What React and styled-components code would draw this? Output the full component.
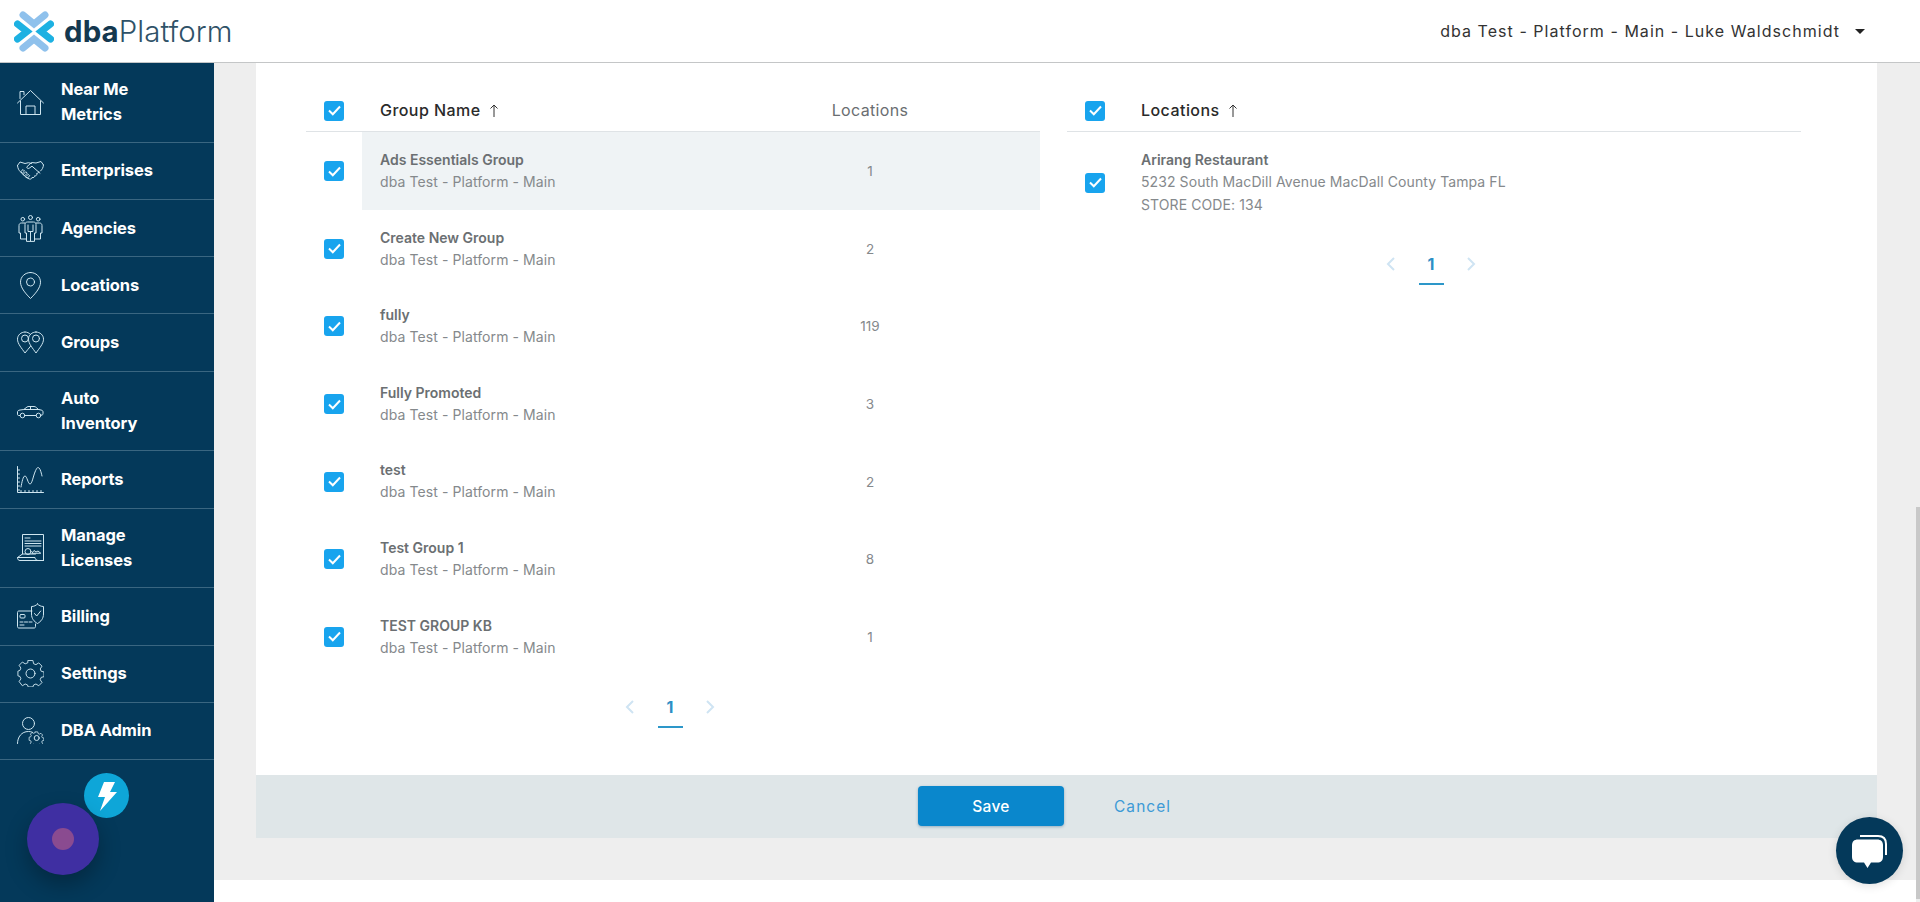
import React from "react";
import styled, { createGlobalStyle } from "styled-components";

const GlobalStyle = createGlobalStyle`
  html, body {
    margin: 0;
    height: 100%;
    overflow: hidden;
    background: #fff;
    font-family: Inter, "Open Sans", "Liberation Sans", sans-serif;
  }
  #root { height: 100%; }
  * { box-sizing: border-box; }
`;

const Shell = styled.div`
  height: 100vh;
  display: flex;
  flex-direction: column;
  position: relative;
  overflow: hidden;
`;

const Header = styled.header`
  height: 63px;
  flex: none;
  background: #fff;
  display: flex;
  align-items: center;
  justify-content: space-between;
  padding: 0 55px 0 14px;
  border-bottom: 1px solid #c4c6c7;
  position: relative;
  z-index: 3;
`;

const Logo = styled.div`
  display: flex;
  align-items: center;
  gap: 10px;
`;

const LogoText = styled.div`
  font-size: 29.4px;
  font-weight: 300;
  color: #2f5268;
  letter-spacing: 0.1px;

  b {
    font-weight: 700;
    color: #14384f;
  }
`;

const Account = styled.div`
  display: flex;
  align-items: center;
  gap: 15px;
  font-size: 16px;
  color: #333;
  letter-spacing: 1.04px;
`;

const Caret = styled.span`
  width: 0;
  height: 0;
  border-left: 5px solid transparent;
  border-right: 5px solid transparent;
  border-top: 5px solid #222;
`;

const Body = styled.div`
  flex: 1;
  min-height: 0;
  display: flex;
`;

const Sidebar = styled.nav`
  width: 214px;
  flex: none;
  background: #04395a;
`;

const NavItem = styled.div`
  height: ${({ $tall }) => ($tall ? "79.8px" : "57.2px")};
  display: flex;
  align-items: center;
  gap: 17px;
  padding-left: 17px;
  border-bottom: 1px solid #3a6681;
  color: #fff;
  font-size: 16.5px;
  font-weight: 700;
  line-height: 25px;
  letter-spacing: -0.1px;

  svg {
    flex: none;
    width: 27px;
    height: 27px;
    fill: none;
    stroke: #cfe6f0;
    stroke-width: 1;
    stroke-linejoin: round;
    stroke-linecap: round;
  }
`;

const Main = styled.main`
  flex: 1;
  min-width: 0;
  display: flex;
  background: #eee;
`;

const Page = styled.div`
  flex: 1;
  min-width: 0;
  display: flex;
  flex-direction: column;
`;

const Workspace = styled.div`
  padding: 0 39px 42px 42px;
`;

const Card = styled.section`
  background: #fff;
`;

const Tables = styled.div`
  height: 712px;
  padding: 16px 77px 0 50px;
  display: flex;
  gap: 27px;
`;

const TableWrap = styled.div`
  width: 734px;
`;

const HeadRow = styled.div`
  height: 53px;
  display: grid;
  grid-template-columns: 56px 338px 340px;
  align-items: center;
  border-bottom: 1px solid #dfe3e6;
  padding-top: 10px;
`;

const Row = styled.div`
  height: ${({ $tall }) => ($tall ? "100px" : "77.6px")};
  display: grid;
  grid-template-columns: 56px 338px 340px;
  align-items: center;
`;

const CheckCell = styled.div`
  padding: 1px 0 0 18px;
  display: flex;
  align-items: center;
`;

const Box = styled.span`
  width: 20px;
  height: 20px;
  border-radius: 3px;
  background: #18a4ee;
  display: flex;
  align-items: center;
  justify-content: center;
`;

const HeadCell = styled.div`
  padding-left: 18px;
  display: flex;
  align-items: center;
  gap: 8px;
  font-size: 16px;
  font-weight: 500;
  color: #2a2a2a;
  letter-spacing: 0.45px;
  white-space: nowrap;
`;

const CountHead = styled.div`
  text-align: center;
  font-size: 16px;
  font-weight: 400;
  color: #6a6e71;
  letter-spacing: 0.35px;
`;

const NameCell = styled.div`
  height: 100%;
  padding: 1px 0 0 18px;
  display: flex;
  flex-direction: column;
  justify-content: center;
  background: ${({ $active }) => ($active ? "#eff3f5" : "transparent")};
  white-space: nowrap;
`;

const CountCell = styled.div`
  height: 100%;
  padding-top: 1px;
  display: flex;
  align-items: center;
  justify-content: center;
  font-size: 13.5px;
  color: #85898c;
  background: ${({ $active }) => ($active ? "#eff3f5" : "transparent")};
`;

const Title = styled.div`
  font-size: 14px;
  line-height: 22px;
  font-weight: 600;
  color: #6b6f72;
`;

const Sub = styled.div`
  font-size: 14px;
  line-height: 22.5px;
  font-weight: 400;
  color: #85898c;
  letter-spacing: 0.09px;
`;

const Pager = styled.div`
  margin: 21px 0 0 318px;
  width: 92px;
  display: flex;
  align-items: flex-start;
  justify-content: space-between;
  color: #cfe4f3;

  svg {
    margin-top: 3px;
  }
`;

const PageNum = styled.div`
  width: 25px;
  height: 32px;
  text-align: center;
  font-size: 16px;
  line-height: 22px;
  font-weight: 700;
  color: #2d8fc6;
  border-bottom: 2px solid #2d97c9;
`;

const Footer = styled.div`
  height: 63px;
  background: #dfe6e8;
  display: flex;
  align-items: flex-start;
  padding: 11px 0 0 662px;
`;

const Save = styled.button`
  width: 146px;
  height: 40px;
  border: 0;
  border-radius: 4px;
  background: #0a87cc;
  color: #fff;
  font: 500 15.5px Inter, sans-serif;
  letter-spacing: 0.3px;
  box-shadow: 0 1px 3px rgba(0, 70, 120, 0.35);
`;

const Cancel = styled.span`
  margin-left: 50px;
  line-height: 42px;
  font-size: 15.5px;
  color: #3d9ad6;
  letter-spacing: 1.05px;
`;

const BottomBand = styled.div`
  flex: 1;
  background: #fff;
`;

const ScrollRail = styled.div`
  width: 4px;
  flex: none;
  padding: 444px 0 3px;
  background: #eee;
`;

const ScrollThumb = styled.div`
  height: 100%;
  background: #c8c8c8;
`;

const RecordOrb = styled.div`
  position: absolute;
  left: 27px;
  top: 803px;
  width: 72px;
  height: 72px;
  border-radius: 50%;
  background: #3f2fa2;
  box-shadow: 0 10px 22px rgba(0, 0, 0, 0.28);
  display: flex;
  align-items: center;
  justify-content: center;

  &::after {
    content: "";
    width: 22px;
    height: 22px;
    border-radius: 50%;
    background: #8a4b90;
  }
`;

const BoltBadge = styled.div`
  position: absolute;
  left: 84px;
  top: 773px;
  width: 45px;
  height: 45px;
  border-radius: 50%;
  background: #0ea6d8;
  display: flex;
  align-items: center;
  justify-content: center;
`;

const ChatBubble = styled.div`
  position: absolute;
  left: 1836px;
  top: 817px;
  width: 67px;
  height: 67px;
  border-radius: 50%;
  background: #04395a;
  box-shadow: 0 2px 10px rgba(0, 0, 0, 0.12);
  display: flex;
  align-items: center;
  justify-content: center;
`;

const LogoMark = () => (
  <svg width="40" height="41" viewBox="0 0 40 41" fill="none" strokeWidth="7" strokeLinecap="round">
    <polyline points="9,4 20,13 31,4" stroke="#8fc1ec" />
    <polyline points="9,37 20,28 31,37" stroke="#8fc1ec" />
    <polyline points="3.500,13 13,20.500 3.500,28" stroke="#1db1e2" />
    <polyline points="36.500,13 27,20.500 36.500,28" stroke="#1db1e2" />
  </svg>
);

const HomeIcon = () => (
  <svg viewBox="0 0 27 27">
    <path d="M.5 14 13.5 1.5 26.5 14" />
    <path d="M3 9.5V2.5h4v3.2" />
    <path d="M3.5 12v13.5h20V12" />
    <path d="M9 25.5V17h9v8.5" />
  </svg>
);

const HandshakeIcon = () => (
  <svg viewBox="0 0 27 27">
    <path d="M.5 8.5 3 5l5 1.5 3.5-.8 3 .8" />
    <path d="M26.5 8 24 4.5 19 6l-4.5-.5-4.5 4.2c-.8 1.2 1 2.3 2.2 1.5l2.8-2 8 7" />
    <path d="M.5 8.5c.2 3 1.5 5 3 6.3l4.5 4.7c1.5 1.3 3 2 4.5 2.5 1.5.4 2.5-.5 2.5-1.5 1.5.5 3-.4 2.6-1.7 1.5.3 2.8-1 2.1-2.4 1.3 0 2-.7 2-1.6" />
    <path d="M26.5 8c-.2 2.5-1.3 4.5-3 6" />
    <path d="m4 14.5 2-2 1.5 1.5-2 2zM6.5 17l2.3-2.3 1.5 1.5-2.3 2.3zM9.2 19.3l2-2 1.5 1.5-2 2z" />
  </svg>
);

const PeopleIcon = () => (
  <svg viewBox="0 0 27 27">
    <circle cx="13.5" cy="2.5" r="2" />
    <circle cx="5.8" cy="4.2" r="1.8" />
    <circle cx="21.2" cy="4.2" r="1.8" />
    <path d="M9.5 26v-8H8V9.5c0-1.5 1-2.5 2.5-2.5h6c1.5 0 2.5 1 2.5 2.5V18h-1.5v8z" />
    <path d="M11 10v6.5h5V10M13.5 16.5V26" />
    <path d="M8 8H4.5C3 8 2 9 2 10.5V18h1.5v6h6" />
    <path d="M19 8h3.5C24 8 25 9 25 10.5V18h-1.5v6h-6" />
  </svg>
);

const PinIcon = () => (
  <svg viewBox="0 0 27 27">
    <path d="M13.5.5c5.5 0 10 4.200 10 9.700 0 6-6 12.300-10 16.300-4-4-10-10.300-10-16.300C3.500 4.700 8 .5 13.500.5z" />
    <circle cx="13.500" cy="10" r="4" />
  </svg>
);

const GroupsIcon = () => (
  <svg viewBox="0 0 27 27">
    <path d="M8 3C3.800 3 .5 6.200.5 10.200c0 4.600 4.200 9 7.500 13.800 1.800-2.300 3.600-4.400 5.500-6.700" />
    <path d="M19 3c4.200 0 7.500 3.200 7.500 7.200 0 4.600-4.200 9-7.500 13.800-3.300-4.800-7.500-9.200-7.500-13.800C11.500 6.200 14.800 3 19 3z" />
    <path d="M8 3c2 0 4 .8 5.500 2.300" />
    <circle cx="8" cy="9.500" r="3.500" />
    <circle cx="19" cy="9.500" r="3.500" />
  </svg>
);

const CarIcon = () => (
  <svg viewBox="0 0 27 27">
    <path d="M3 18.500H1.500C.8 18.500.5 18 .5 17v-2.200c0-1 1-1.600 2.500-1.800l3.800-.5 3.200-2.500c.7-.5 1.300-.5 2-.5h5c1 0 1.600.3 2.300 1l2.200 2 2.500.5c1.500.3 2 1 2 2v1.500c0 1-.4 1.500-1.200 1.500H24" />
    <circle cx="5.500" cy="18.500" r="2.300" />
    <circle cx="21.500" cy="18.500" r="2.300" />
    <path d="M8 18.500h11M7 12.500h15M13.500 10v2.500" />
  </svg>
);

const ChartIcon = () => (
  <svg viewBox="0 0 27 27">
    <path d="M.5.5v26h26" />
    <path d="M.5 4h2M.5 8h2M.5 12h2M.5 16h2M.5 20h2M.5 24h2M4 26.500v-2M8 26.500v-2M12 26.500v-2M16 26.500v-2M20 26.500v-2M24 26.500v-2" />
    <path d="M4 21c1-5 2-11 4-11s3 8 5 8 3-7 5-12 3-5 4-4c1.500 1 2.500 6 3 8" />
  </svg>
);

const LicenseIcon = () => (
  <svg viewBox="0 0 27 27">
    <path d="M5.500 20V.5h21v26" />
    <path d="M26.500 26.500H3C1.500 26.500.5 25.500.5 23.500H18c.3 2 1.300 3 3 3" />
    <path d="M.5 23.500 5.500 20h13" />
    <path d="M8 4h5M8 7h16M8 9.500h16M8 12h16" />
    <circle cx="11" cy="17.500" r="3" />
    <path d="m15 19 2-2.500 2 1.500 2-1 2.500 2z" />
  </svg>
);

const BillingIcon = () => (
  <svg viewBox="0 0 27 27">
    <path d="M15 8H2C1 8 .5 8.500.5 9.500v14c0 1 .5 1.500 1.500 1.500h15c1 0 1.500-.5 1.500-1.500V21" />
    <rect x="3" y="11.500" width="5" height="3.500" rx="1" />
    <path d="M3 19h3M7.500 19h3M12 19h3M3 22h4" />
    <path d="M20.500 1c1.500 1.500 3.500 2.500 6 2.500V11c0 4.500-2.500 7.500-6 9.500-3.500-2-6-5-6-9.500V3.500c2.500 0 4.500-1 6-2.500z" />
    <path d="m17.500 10.500 2.200 2.500 4-5" />
  </svg>
);

const GearIcon = () => (
  <svg viewBox="0 0 27 27">
    <path d="M11 .5h5l.8 3.500 2.500 1 3-1.900 3.500 3.500-1.900 3 1 2.500 3.100.8v5l-3.100.8-1 2.500 1.900 3-3.500 3.500-3-1.900-2.500 1-.8 2.200h-5l-.8-2.200-2.500-1-3 1.900L1.200 23.200l1.900-3-1-2.500L-.1 17v-5l2.200-.8 1-2.500-1.900-3L4.700 2.200l3 1.900 2.500-1z" transform="translate(1 0) scale(.93)" />
    <circle cx="13.500" cy="13.500" r="4.500" />
  </svg>
);

const AdminIcon = () => (
  <svg viewBox="0 0 27 27">
    <circle cx="11.500" cy="6.500" r="6" />
    <path d="M.5 26.500c0-6.500 4-12 11-12 1.500 0 2.800.2 4 .8" />
    <path d="m18 14.500h3l.5 2 1.600.7 1.800-1 2 2-1 1.800.7 1.500 1.900.5v2.800l-1.900.5-.7 1.500 1 1.800-2 2-1.800-1-1.600.7-.5 1h-3l-.5-1-1.600-.7-1.800 1-2-2 1-1.800-.7-1.500-1.900-.5V21l1.900-.5.7-1.500-1-1.800 2-2 1.800 1 1.600-.7z" transform="translate(3.500 3) scale(.82)" />
    <circle cx="19.700" cy="21" r="2.500" />
  </svg>
);

const CheckMark = () => (
  <svg width="13" height="11" viewBox="0 0 13 11" fill="none" stroke="#fff" strokeWidth="2">
    <polyline points="1,5.500 4.800,9.200 12,1.500" />
  </svg>
);

const SortArrow = () => (
  <svg width="10" height="13" viewBox="0 0 10 13" fill="none" stroke="#333" strokeWidth="1">
    <path d="M5 13V1M1.500 4.500 5 1l3.500 3.500" />
  </svg>
);

const Chevron = ({ flip }) => (
  <svg width="12" height="16" viewBox="0 0 12 16" fill="none" stroke="currentColor" strokeWidth="2">
    <polyline points={flip ? "3,2 9,8 3,14" : "9,2 3,8 9,14"} />
  </svg>
);

const navItems = [
  { icon: HomeIcon, lines: ["Near Me", "Metrics"] },
  { icon: HandshakeIcon, lines: ["Enterprises"] },
  { icon: PeopleIcon, lines: ["Agencies"] },
  { icon: PinIcon, lines: ["Locations"] },
  { icon: GroupsIcon, lines: ["Groups"] },
  { icon: CarIcon, lines: ["Auto", "Inventory"] },
  { icon: ChartIcon, lines: ["Reports"] },
  { icon: LicenseIcon, lines: ["Manage", "Licenses"] },
  { icon: BillingIcon, lines: ["Billing"] },
  { icon: GearIcon, lines: ["Settings"] },
  { icon: AdminIcon, lines: ["DBA Admin"] },
];

const groups = [
  { name: "Ads Essentials Group", count: 1 },
  { name: "Create New Group", count: 2 },
  { name: "fully", count: 119 },
  { name: "Fully Promoted", count: 3 },
  { name: "test", count: 2 },
  { name: "Test Group 1", count: 8 },
  { name: "TEST GROUP KB", count: 1 },
];

const Check = () => (
  <CheckCell>
    <Box>
      <CheckMark />
    </Box>
  </CheckCell>
);

const Pagination = () => (
  <Pager>
    <Chevron />
    <PageNum>1</PageNum>
    <Chevron flip />
  </Pager>
);

const App = () => (
  <Shell>
    <GlobalStyle />
    <Header>
      <Logo>
        <LogoMark />
        <LogoText>
          <b>dba</b>Platform
        </LogoText>
      </Logo>
      <Account>
        dba Test - Platform - Main - Luke Waldschmidt
        <Caret />
      </Account>
    </Header>
    <Body>
      <Sidebar>
        {navItems.map(({ icon: Icon, lines }) => (
          <NavItem key={lines[0]} $tall={lines.length > 1}>
            <Icon />
            <div>
              {lines.map((line) => (
                <div key={line}>{line}</div>
              ))}
            </div>
          </NavItem>
        ))}
      </Sidebar>
      <Main>
        <Page>
          <Workspace>
            <Card>
              <Tables>
                <TableWrap>
                  <HeadRow>
                    <Check />
                    <HeadCell>
                      Group Name <SortArrow />
                    </HeadCell>
                    <CountHead>Locations</CountHead>
                  </HeadRow>
                  {groups.map((group, i) => (
                    <Row key={group.name}>
                      <Check />
                      <NameCell $active={i === 0}>
                        <Title>{group.name}</Title>
                        <Sub>dba Test - Platform - Main</Sub>
                      </NameCell>
                      <CountCell $active={i === 0}>{group.count}</CountCell>
                    </Row>
                  ))}
                  <Pagination />
                </TableWrap>
                <TableWrap>
                  <HeadRow>
                    <Check />
                    <HeadCell>
                      Locations <SortArrow />
                    </HeadCell>
                  </HeadRow>
                  <Row $tall>
                    <Check />
                    <NameCell>
                      <Title>Arirang Restaurant</Title>
                      <Sub>5232 South MacDill Avenue MacDall County Tampa FL</Sub>
                      <Sub>STORE CODE: 134</Sub>
                    </NameCell>
                  </Row>
                  <Pagination />
                </TableWrap>
              </Tables>
              <Footer>
                <Save>Save</Save>
                <Cancel>Cancel</Cancel>
              </Footer>
            </Card>
          </Workspace>
          <BottomBand />
        </Page>
        <ScrollRail>
          <ScrollThumb />
        </ScrollRail>
      </Main>
    </Body>
    <BoltBadge>
      <svg width="22" height="30" viewBox="0 0 22 30" fill="#fff">
        <path d="M8 1h11l-5 10h7L4 30l5-14H2z" />
      </svg>
    </BoltBadge>
    <RecordOrb />
    <ChatBubble>
      <svg width="40" height="40" viewBox="0 0 40 40" fill="none">
        <path d="M10 5h18c5 0 8 3 8 8v11" stroke="#fff" strokeWidth="2" />
        <path d="M8 8.500h19c4 0 6 2 6 6v11c0 4-2 6-6 6h-6l-3.500 5.500-3.500-5.500H8c-4 0-6-2-6-6v-11c0-4 2-6 6-6z" fill="#fff" />
      </svg>
    </ChatBubble>
  </Shell>
);

export default App;
